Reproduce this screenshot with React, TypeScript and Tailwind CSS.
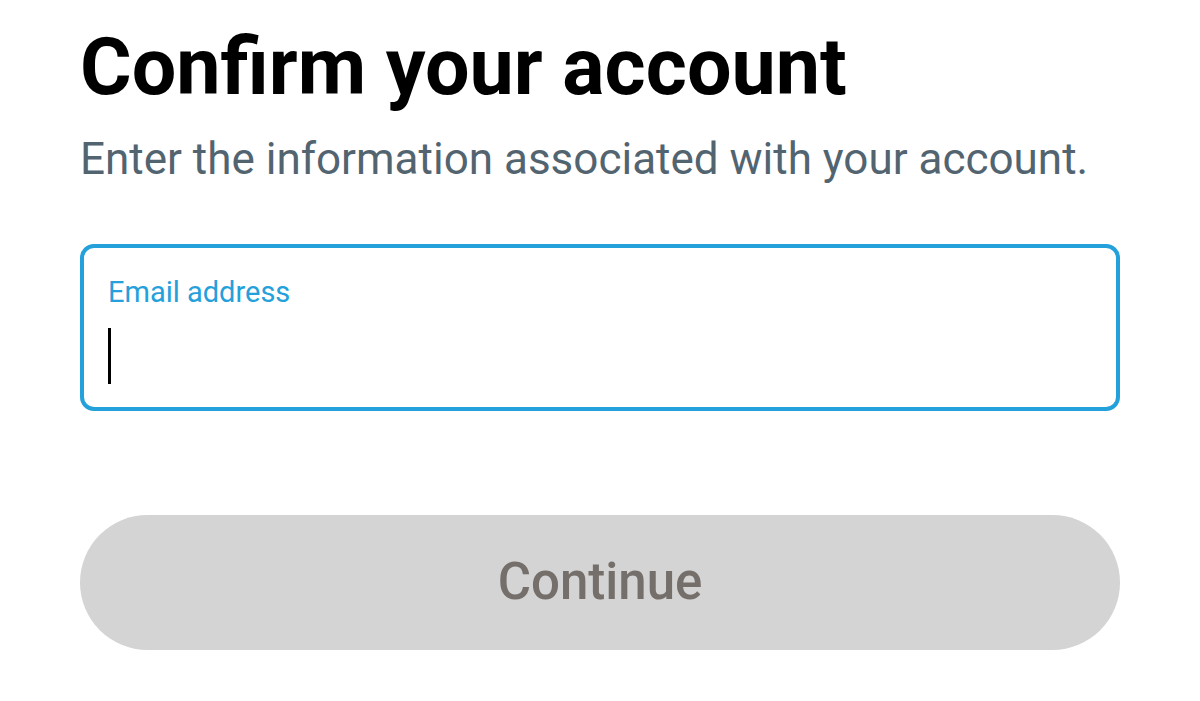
export default function App() {
  return (
    <div className="w-[1200px] h-[701px] bg-white px-20 pt-[22px] font-['Roboto',sans-serif]">
      <h1 className="text-[79px] leading-[90px] font-bold text-black">
        Confirm your account
      </h1>
      <p className="mt-[21px] text-[44px] leading-[52px] text-[#536471]">
        Enter the information associated with your account.
      </p>
      <div className="mt-[59px] h-[167px] rounded-[14px] border-[4.5px] border-[#24a0db] px-6 pt-[26px]">
        <div className="text-[29px] leading-[36px] text-[#24a0db]">Email address</div>
        <div className="mt-[18px] h-[56px] w-[3px] bg-black" />
      </div>
      <button className="mt-[104px] h-[135px] w-full rounded-full bg-[#d4d4d4] text-[51px] font-medium text-[#756f6b]">
        Continue
      </button>
    </div>
  );
}
